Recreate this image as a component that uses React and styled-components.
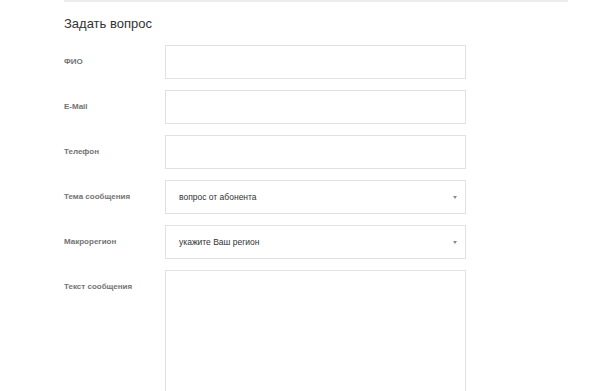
import React from "react";
import styled, { createGlobalStyle } from "styled-components";

const GlobalStyle = createGlobalStyle`
  body {
    margin: 0;
    background: #fff;
    font-family: "Liberation Sans", Arial, sans-serif;
  }
`;

const Page = styled.div`
  padding: 0 32px 0 64px;
  width: 504px;
`;

const Rule = styled.div`
  border-top: 2px solid #ececec;
`;

const Title = styled.h2`
  margin: 14px 0 0;
  font-size: 13px;
  line-height: 15px;
  font-weight: 400;
  color: #333;
`;

const Form = styled.form`
  margin-top: 14px;
  display: flex;
  flex-direction: column;
  gap: 11px;
`;

const Row = styled.div`
  display: grid;
  grid-template-columns: 101px 301px;
  align-items: start;
`;

const Label = styled.label`
  font-size: 8px;
  line-height: 34px;
  font-weight: 700;
  color: #737373;
`;

const Input = styled.input`
  box-sizing: border-box;
  width: 100%;
  height: 34px;
  margin: 0;
  border: 1px solid #e1e1e1;
  border-radius: 0;
  background: #fff;
  outline: none;
`;

const SelectWrap = styled.div`
  position: relative;
  &::after {
    content: "";
    position: absolute;
    right: 9px;
    top: 16px;
    border-left: 2px solid transparent;
    border-right: 2px solid transparent;
    border-top: 3px solid #8a8a8a;
  }
`;

const Select = styled.select`
  appearance: none;
  box-sizing: border-box;
  width: 100%;
  height: 34px;
  margin: 0;
  padding: 0 20px 0 13px;
  border: 1px solid #e1e1e1;
  border-radius: 0;
  background: #fff;
  font-family: "Liberation Sans", Arial, sans-serif;
  font-size: 8.5px;
  color: #333;
  outline: none;
`;

const TextArea = styled.textarea`
  box-sizing: border-box;
  width: 100%;
  height: 150px;
  margin: 0;
  border: 1px solid #e1e1e1;
  border-radius: 0;
  resize: none;
  display: block;
  outline: none;
`;

const fields = [
  { id: "fio", label: "ФИО" },
  { id: "email", label: "E-Mail" },
  { id: "phone", label: "Телефон" },
];

const selects = [
  { id: "topic", label: "Тема сообщения", value: "вопрос от абонента" },
  { id: "region", label: "Макрорегион", value: "укажите Ваш регион" },
];

const App = () => {
  return (
    <Page>
      <GlobalStyle />
      <Rule />
      <Title>Задать вопрос</Title>
      <Form>
        {fields.map((f) => (
          <Row key={f.id}>
            <Label htmlFor={f.id}>{f.label}</Label>
            <Input id={f.id} />
          </Row>
        ))}
        {selects.map((s) => (
          <Row key={s.id}>
            <Label htmlFor={s.id}>{s.label}</Label>
            <SelectWrap>
              <Select id={s.id} defaultValue={s.value}>
                <option>{s.value}</option>
              </Select>
            </SelectWrap>
          </Row>
        ))}
        <Row>
          <Label htmlFor="text">Текст сообщения</Label>
          <TextArea id="text" />
        </Row>
      </Form>
    </Page>
  );
};

export default App;
